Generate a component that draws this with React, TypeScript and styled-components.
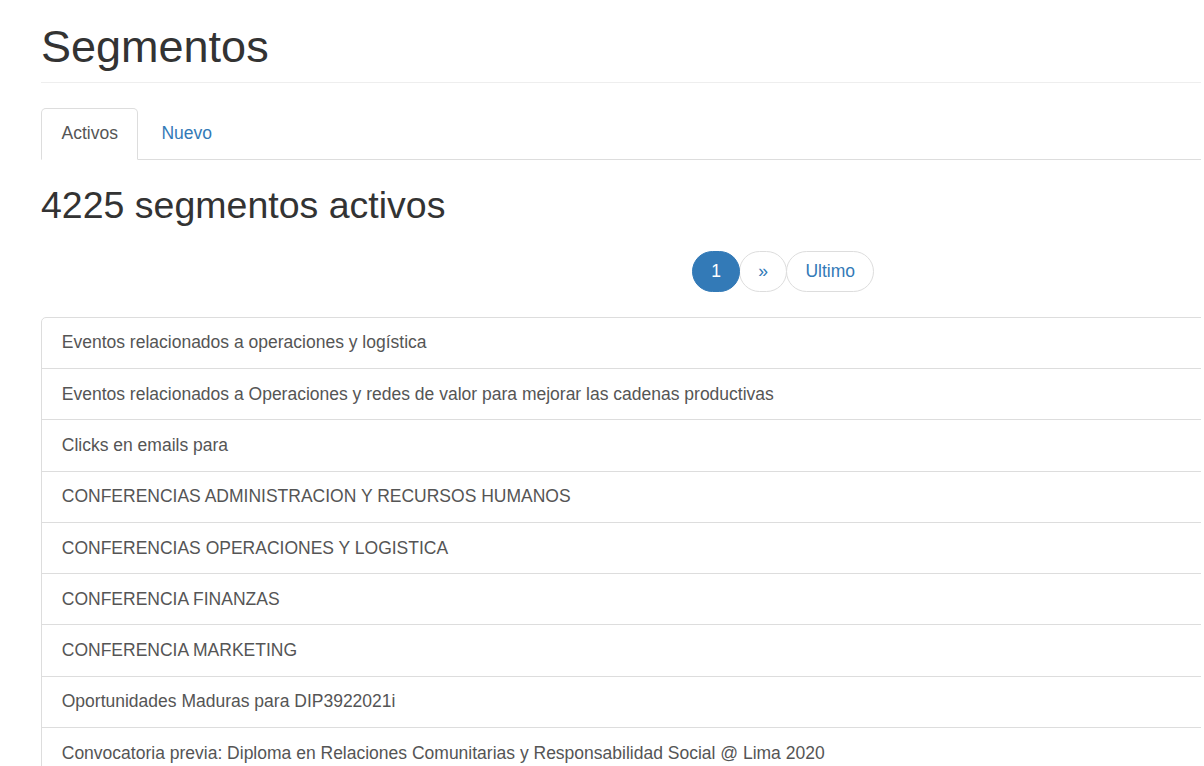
import styled, { createGlobalStyle } from "styled-components";

const GlobalStyle = createGlobalStyle`
    html, body {
        margin: 0;
        padding: 0;
        background: #fff;
    }
    body {
        font-family: "Liberation Sans", Arial, Helvetica, sans-serif;
        font-size: 17.5px;
        line-height: 25px;
        color: #333;
        overflow: hidden;
    }
`;

const Page = styled.div`
    width: 1160px;
    margin-left: 41px;
    overflow: hidden;
`;

const Header = styled.div`
    padding: 22px 0 10px;
    border-bottom: 1px solid #eee;
    h1 {
        margin: 0;
        font-size: 45px;
        line-height: 49.5px;
        font-weight: 500;
        color: #333;
    }
`;

const Tabs = styled.ul`
    display: flex;
    list-style: none;
    margin: 25px 0 0;
    padding: 0;
    border-bottom: 1px solid #ddd;
`;

const Tab = styled.li<{ $active?: boolean }>`
    margin-bottom: -1px;
    margin-right: 2.5px;
    a {
        display: block;
        padding: 12.5px 19.5px;
        line-height: 25px;
        border: 1px solid ${(p) => (p.$active ? "#ddd" : "transparent")};
        border-bottom-color: transparent;
        border-radius: 5px 5px 0 0;
        background: ${(p) => (p.$active ? "#fff" : "transparent")};
        color: ${(p) => (p.$active ? "#555" : "#337ab7")};
        text-decoration: none;
    }
`;

const Title = styled.h2`
    margin: 25px 0 0;
    font-size: 37.5px;
    line-height: 41.25px;
    font-weight: 500;
    color: #333;
`;

const Pager = styled.ul`
    display: flex;
    list-style: none;
    margin: 25px 0 0;
    padding: 0 0 0 651px;
`;

const PageLink = styled.li<{ $active?: boolean }>`
    & + & {
        margin-left: -1px;
    }
    a {
        display: block;
        padding: 7px 18.2px;
        line-height: 25px;
        border: 1px solid ${(p) => (p.$active ? "#337ab7" : "#ddd")};
        border-radius: 21px;
        background: ${(p) => (p.$active ? "#337ab7" : "#fff")};
        color: ${(p) => (p.$active ? "#fff" : "#337ab7")};
        text-decoration: none;
        position: relative;
        z-index: ${(p) => (p.$active ? 2 : 1)};
    }
`;

const List = styled.div`
    margin-top: 25px;
    width: calc(100% + 20px);
`;

const Item = styled.a`
    display: block;
    padding: 12.65px 19.75px;
    line-height: 25px;
    border: 1px solid #ddd;
    margin-bottom: -1px;
    color: #555;
    text-decoration: none;
    background: #fff;
    &:first-child {
        border-radius: 5px 5px 0 0;
    }
`;

const segments = [
    "Eventos relacionados a operaciones y logística",
    "Eventos relacionados a Operaciones y redes de valor para mejorar las cadenas productivas",
    "Clicks en emails para",
    "CONFERENCIAS ADMINISTRACION Y RECURSOS HUMANOS",
    "CONFERENCIAS OPERACIONES Y LOGISTICA",
    "CONFERENCIA FINANZAS",
    "CONFERENCIA MARKETING",
    "Oportunidades Maduras para DIP3922021i",
    "Convocatoria previa: Diploma en Relaciones Comunitarias y Responsabilidad Social @ Lima 2020",
];

function App() {
    return (
        <>
            <GlobalStyle />
            <Page>
                <Header>
                    <h1>Segmentos</h1>
                </Header>
                <Tabs>
                    <Tab $active><a href="#">Activos</a></Tab>
                    <Tab><a href="#">Nuevo</a></Tab>
                </Tabs>
                <Title>4225 segmentos activos</Title>
                <Pager>
                    <PageLink $active><a href="#">1</a></PageLink>
                    <PageLink><a href="#">»</a></PageLink>
                    <PageLink><a href="#">Ultimo</a></PageLink>
                </Pager>
                <List>
                    {segments.map((s) => (
                        <Item href="#" key={s}>{s}</Item>
                    ))}
                </List>
            </Page>
        </>
    );
}

export default App;
